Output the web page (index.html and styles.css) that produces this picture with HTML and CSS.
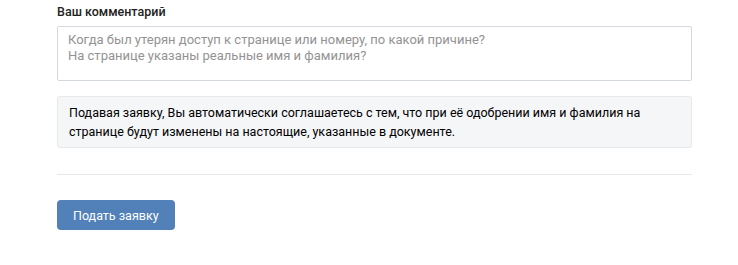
FILE: index.html
```html
<!DOCTYPE html>
<html lang="ru">
<head>
  <meta charset="UTF-8">
  <title>Заявка</title>
  <link rel="stylesheet" href="styles.css">
</head>
<body>
  <div class="form">
    <label class="label" for="comment">Ваш комментарий</label>
    <textarea id="comment" class="comment" placeholder="Когда был утерян доступ к странице или номеру, по какой причине?&#10;На странице указаны реальные имя и фамилия?"></textarea>

    <div class="notice">
      Подавая заявку, Вы автоматически соглашаетесь с тем, что при её одобрении имя и фамилия на
      странице будут изменены на настоящие, указанные в документе.
    </div>

    <div class="divider"></div>

    <button class="submit">Подать заявку</button>
  </div>
</body>
</html>
```

FILE: styles.css
```css
* {
  margin: 0;
  padding: 0;
  box-sizing: border-box;
}

body {
  font-family: Roboto, "Liberation Sans", sans-serif;
  font-size: 12.5px;
  color: #000;
  background: #fff;
}

.form {
  width: 635px;
  margin-left: 57px;
  padding-top: 4px;
  display: flex;
  flex-direction: column;
  align-items: flex-start;
}

.label {
  font-weight: 500;
  line-height: 16px;
  color: #222;
  margin-bottom: 6px;
}

.comment {
  width: 100%;
  height: 55px;
  padding: 5px 10px;
  border: 1px solid #d3d9de;
  border-radius: 2px;
  font-family: inherit;
  font-size: 13px;
  line-height: 16px;
  resize: none;
  outline: none;
}

.comment::placeholder {
  color: #939393;
}

.notice {
  width: 100%;
  margin-top: 15px;
  padding: 6px 11px;
  line-height: 19px;
  background: #f5f6f8;
  border: 1px solid #e7e8ec;
  border-radius: 3px;
}

.divider {
  width: 100%;
  height: 1px;
  margin-top: 26px;
  background: #e7e8ec;
}

.submit {
  margin-top: 25px;
  height: 30px;
  padding: 0 16px;
  background: #5181b8;
  color: #fff;
  border: none;
  border-radius: 4px;
  font-family: inherit;
  font-size: 12.5px;
  cursor: pointer;
}

.submit:hover {
  background: #5b88bd;
}
```
